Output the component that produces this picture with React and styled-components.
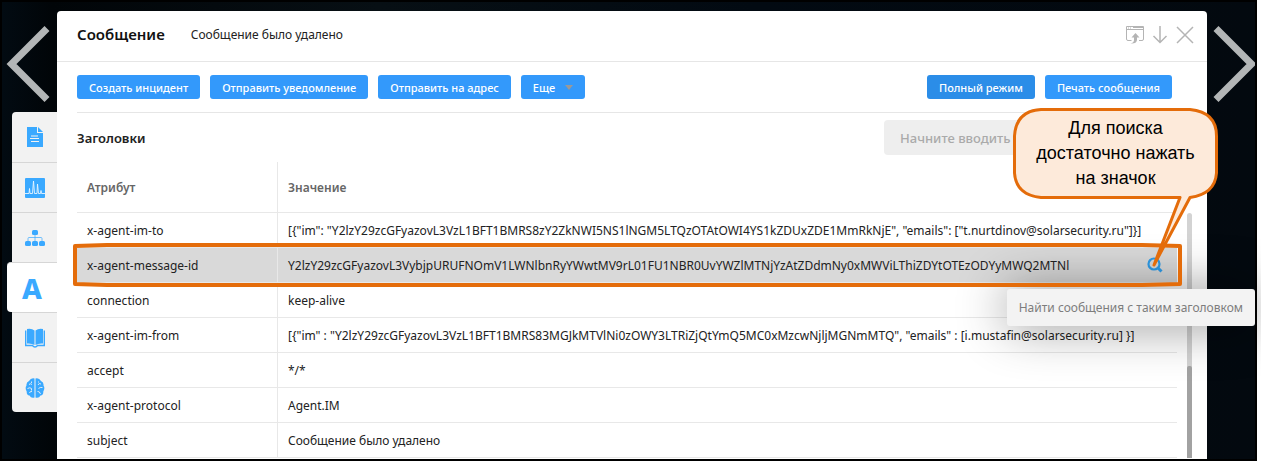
import React from 'react';
import styled, { createGlobalStyle, css } from 'styled-components';

const GlobalStyle = createGlobalStyle`
    * {
        box-sizing: border-box;
    }
    body {
        margin: 0;
        background: #fff;
        color: #222;
        font-family: 'Noto Sans', sans-serif;
        font-size: 12px;
    }
    button, input {
        font-family: inherit;
    }
`;

const Screen = styled.div`
    display: flex;
    margin: 0 4px 7px 0;
    border: 2px solid #000;
    background: linear-gradient(90deg, #020b12, #010508 50px, #070f14 30%, #020a12 60%, #03090f);
`;

const LeftRail = styled.div`
    flex: 0 0 55px;
    display: flex;
    flex-direction: column;
    align-items: flex-end;
`;

const RightRail = styled.div`
    flex: 0 0 48px;
    overflow: hidden;
`;

const PagerButton = styled.button`
    display: block;
    width: 100%;
    height: 110px;
    padding: 0;
    border: 0;
    background: none;
    svg {
        display: block;
    }
`;

const Tab = styled.button`
    display: flex;
    align-items: center;
    justify-content: center;
    width: 45px;
    height: 50px;
    padding: 0;
    border: 0;
    border-top: 1px solid #d6d6d6;
    background: #f2f2f2;
    color: #3aa9ff;
    &:nth-of-type(2) {
        border-top: 0;
        border-top-left-radius: 4px;
    }
    &:last-child {
        border-bottom-left-radius: 4px;
    }
    ${(props) =>
        props.$active &&
        css`
            width: 50px;
            border-radius: 4px 0 0 4px;
            background: #fff;
        `}
`;

const TabLetter = styled.span`
    font-size: 28px;
    line-height: 28px;
    font-weight: 800;
`;

const Modal = styled.main`
    position: relative;
    flex: 1;
    min-width: 0;
    margin-top: 9px;
    padding-bottom: 1px;
    border-radius: 4px 4px 0 0;
    background: #fff;
`;

const ModalHeader = styled.header`
    display: flex;
    align-items: center;
    height: 51px;
    padding: 0 12px 4px 20px;
    border-bottom: 1px solid #e6e6e6;
`;

const ModalTitle = styled.h1`
    margin: 0 26px 0 0;
    font-size: 15px;
    font-weight: 600;
    color: #111;
`;

const Subject = styled.span`
    flex: 1;
    font-size: 12px;
`;

const HeaderActions = styled.div`
    display: flex;
    gap: 6px;
`;

const IconButton = styled.button`
    display: block;
    padding: 0;
    border: 0;
    background: none;
    color: ${(props) => props.$color || '#b4b4b4'};
    svg {
        display: block;
    }
`;

const Toolbar = styled.div`
    display: flex;
    align-items: center;
    gap: 10px;
    height: 51px;
    margin: 0 20px;
    padding-right: 15px;
    border-bottom: 1px solid #e6e6e6;
`;

const Spacer = styled.div`
    flex: 1;
`;

const Button = styled.button`
    display: flex;
    align-items: center;
    gap: 10px;
    height: 24px;
    padding: 0 12px;
    border: 0;
    border-radius: 3px;
    background: ${(props) => (props.$pressed ? '#2b8de8' : '#3399fb')};
    color: #fff;
    font-size: 11px;
    font-weight: 500;
    white-space: nowrap;
`;

const Caret = styled.span`
    border: 4px solid transparent;
    border-top: 5px solid #999;
    border-bottom: 0;
`;

const SectionHeader = styled.div`
    display: flex;
    align-items: center;
    justify-content: space-between;
    height: 49px;
    padding: 0 30px 0 20px;
`;

const SectionTitle = styled.h2`
    margin: 0;
    font-size: 13px;
    font-weight: 600;
    color: #222;
`;

const Search = styled.input`
    width: 293px;
    height: 35px;
    padding: 0 16px;
    border: 0;
    border-radius: 4px;
    background: #eee;
    font-size: 13px;
    font-weight: 500;
    &::placeholder {
        color: #aaa;
    }
`;

const TableArea = styled.div`
    display: flex;
    gap: 10px;
    padding: 0 15px 0 20px;
`;

const Table = styled.table`
    flex: 1;
    min-width: 0;
    table-layout: fixed;
    border-collapse: separate;
    border-spacing: 0;
`;

const HeadCell = styled.th`
    width: ${(props) => props.$width || 'auto'};
    height: 51px;
    padding: 0 10px;
    border-bottom: 1px solid #e8e8e8;
    border-right: ${(props) => (props.$width ? '1px solid #e8e8e8' : '0')};
    color: #666;
    font-size: 12px;
    font-weight: 600;
    text-align: left;
`;

const Row = styled.tr`
    position: relative;
    background: ${(props) => (props.$selected ? '#d9d9d9' : '#fff')};
`;

const Cell = styled.td`
    height: 35px;
    padding: 0 10px;
    border-bottom: 1px solid #e8e8e8;
    font-size: 12px;
    white-space: nowrap;
    &:first-child {
        border-right: 1px solid #e8e8e8;
    }
`;

const CellContent = styled.div`
    display: flex;
    align-items: center;
    justify-content: space-between;
    padding-right: 4px;
`;

const RowOutline = styled.svg`
    position: absolute;
    z-index: 3;
    top: -5px;
    left: -5px;
    width: calc(100% + 11px);
    height: 45px;
    overflow: visible;
    pointer-events: none;
`;

const ScrollTrack = styled.div`
    display: flex;
    flex-direction: column;
    justify-content: flex-end;
    width: 5px;
    margin-top: 51px;
    border-radius: 3px 3px 0 0;
    background: #d3d3d3;
`;

const ScrollThumb = styled.div`
    height: 92px;
    border-radius: 2px 2px 0 0;
    background: #a2a2a2;
`;

const Tooltip = styled.div`
    position: absolute;
    z-index: 2;
    top: 278px;
    right: -48px;
    padding: 0 12px;
    border-radius: 3px;
    background: #f3f3f3;
    box-shadow: 0 0 50px rgba(0, 0, 0, 0.45);
    color: #7d7d7d;
    font-size: 12px;
    line-height: 37px;
    white-space: nowrap;
`;

const Callout = styled.div`
    position: absolute;
    z-index: 4;
    top: 97px;
    right: -11px;
    width: 205px;
    padding: 8px 0;
    color: #000;
    font-family: 'Liberation Sans', Arial, sans-serif;
    font-size: 18px;
    line-height: 25px;
    text-align: center;
    pointer-events: none;
`;

const CalloutShape = styled.svg`
    position: absolute;
    top: 0;
    left: 0;
`;

const CalloutText = styled.p`
    position: relative;
    margin: 0;
`;

const ArrowLeft = () => (
    <svg width="55" height="110" fill="none" stroke="#b3b6b7" strokeWidth="7">
        <path d="M45 26.500 9.500 62l35.500 35.500" />
    </svg>
);

const ArrowRight = () => (
    <svg width="55" height="110" fill="none" stroke="#b3b6b7" strokeWidth="7">
        <path d="M9 26.500 44.500 62 9 97.500" />
    </svg>
);

const DocumentIcon = () => (
    <svg width="16" height="20" viewBox="0 0 16 20" fill="currentColor">
        <path d="M0 0h10v6h6v14H0z" />
        <path d="M11 0l5 5h-5z" />
        <path d="M4 9h7M3 11.500h9M4 14.500h8" stroke="#f2f2f2" strokeWidth="1" />
    </svg>
);

const SpectrumIcon = () => (
    <svg width="20" height="20" viewBox="0 0 20 20">
        <rect width="20" height="20" rx="1" fill="currentColor" />
        <path
            d="M0 15.500h4l.5-5 .5 5h2.500l1-12.500 1 12.500h2.500l.5-9.500 1 9.500h2l.5-3 .5 3h3.500"
            fill="none"
            stroke="#e8f5ff"
            strokeWidth=".9"
        />
    </svg>
);

const HierarchyIcon = () => (
    <svg width="20" height="16" viewBox="0 0 20 16" fill="currentColor">
        <rect x="7" y="0" width="6" height="5" rx="1.500" />
        <rect x="0" y="11" width="6" height="5" rx="1.500" />
        <rect x="7" y="11" width="6" height="5" rx="1.500" />
        <rect x="14" y="11" width="6" height="5" rx="1.500" />
        <path d="M10 5v6M3 11V8.500Q3 7.500 4 7.500h12Q17 7.500 17 8.500V11" fill="none" stroke="currentColor" opacity=".7" />
    </svg>
);

const BookIcon = () => (
    <svg width="20" height="20" viewBox="0 0 20 20" fill="currentColor">
        <path d="M2 1Q6.500 0 9.500 2.500V17Q6.500 15 2 15.500z" />
        <path d="M18 1Q13.500 0 10.500 2.500V17Q13.500 15 18 15.500z" />
        <path
            d="M.7 2.500V17.500H7.500Q8.500 19 10 19t2.500-1.500h6.800V2.500"
            fill="none"
            stroke="currentColor"
            strokeWidth="1.400"
        />
    </svg>
);

const BrainIcon = () => (
    <svg width="20" height="20" viewBox="0 0 20 20" fill="currentColor">
        <path d="M9.500.5v19Q6 20.500 4.500 17.500 1.500 17 1.700 13.500-.3 10 1.500 7.500 1 4.500 4 3 6-.5 9.500.5z" />
        <path d="M10.500.5v19Q14 20.500 15.500 17.500 18.500 17 18.300 13.500 20.300 10 18.500 7.500 19 4.500 16 3 14-.5 10.500.5z" />
        <path
            d="M4 6.500q1.500-1.500 3 0M2.500 10.500q2.500-1.500 4 0v2M4.500 15q.500-2 2.500-1.500M6.500 3.500v1.500M16 6q-2-1.500-3 1M17.500 9.500q-2.500-.5-4 1M12.500 13.500q2-.5 3 2.500M13.500 3.500v1"
            fill="none"
            stroke="#f2f2f2"
            strokeWidth=".9"
        />
    </svg>
);

const WindowIcon = () => (
    <svg width="19" height="19" viewBox="0 0 19 19" fill="none" stroke="currentColor">
        <path d="M5.500 15.500H2Q.5 15.500.5 14V1.500H17.500V14Q17.500 15.500 16 15.500H13M.5 4.500h17" />
        <path d="M2 3h1M4 3h1M7 2.500h10" />
        <path d="M4.500 18.500Q8 17.500 8 15V12.500H5.500L9.500 8l4 4.500H11V15Q10.500 19 4.500 18.500z" fill="currentColor" stroke="none" />
    </svg>
);

const DownIcon = () => (
    <svg width="19" height="19" viewBox="0 0 19 19" fill="none" stroke="currentColor" strokeWidth="1.500">
        <path d="M9 1v16M2.500 11l6.500 6.500 6.500-6.500" />
    </svg>
);

const CloseIcon = () => (
    <svg width="19" height="19" viewBox="0 0 19 19" fill="none" stroke="currentColor" strokeWidth="1.500">
        <path d="M1 2l16 16M17 2l-16 16" />
    </svg>
);

const SearchIcon = () => (
    <svg width="16" height="16" viewBox="0 0 16 16" fill="none" stroke="currentColor">
        <circle cx="7" cy="7" r="5.500" strokeWidth="2.200" />
        <path d="M11 11l3.500 3.500" strokeWidth="3" />
    </svg>
);

const headers = [
    {
        name: 'x-agent-im-to',
        value: '[{"im": "Y2lzY29zcGFyazovL3VzL1BFT1BMRS8zY2ZkNWI5NS1lNGM5LTQzOTAtOWI4YS1kZDUxZDE1MmRkNjE", "emails": ["t.nurtdinov@solarsecurity.ru"]}]',
    },
    {
        name: 'x-agent-message-id',
        value: 'Y2lzY29zcGFyazovL3VybjpURUFNOmV1LWNlbnRyYWwtMV9rL01FU1NBR0UvYWZlMTNjYzAtZDdmNy0xMWViLThiZDYtOTEzODYyMWQ2MTNl',
        selected: true,
    },
    { name: 'connection', value: 'keep-alive' },
    {
        name: 'x-agent-im-from',
        value: '[{"im" : "Y2lzY29zcGFyazovL3VzL1BFT1BMRS83MGJkMTVlNi0zOWY3LTRiZjQtYmQ5MC0xMzcwNjljMGNmMTQ", "emails" : [i.mustafin@solarsecurity.ru] }]',
    },
    { name: 'accept', value: '*/*' },
    { name: 'x-agent-protocol', value: 'Agent.IM' },
    { name: 'subject', value: 'Сообщение было удалено' },
];

const HeaderRow = ({ name, value, selected }) => (
    <Row $selected={selected}>
        <Cell>
            {name}
            {selected && (
                <RowOutline viewBox="0 0 1111 45" preserveAspectRatio="none">
                    <path
                        d="M3 3L35 2H1070L1108 3V41L1070 42H35L3 41z"
                        fill="none"
                        stroke="#e46c0a"
                        strokeWidth="4"
                        strokeLinejoin="round"
                        vectorEffect="non-scaling-stroke"
                    />
                </RowOutline>
            )}
        </Cell>
        <Cell>
            <CellContent>
                {value}
                {selected && (
                    <IconButton $color="#2f9ce8" aria-label="Найти">
                        <SearchIcon />
                    </IconButton>
                )}
            </CellContent>
        </Cell>
    </Row>
);

const App = () => (
    <>
        <GlobalStyle />
        <Screen>
            <LeftRail>
                <PagerButton aria-label="Назад">
                    <ArrowLeft />
                </PagerButton>
                <Tab aria-label="Документ">
                    <DocumentIcon />
                </Tab>
                <Tab aria-label="Спектр">
                    <SpectrumIcon />
                </Tab>
                <Tab aria-label="Структура">
                    <HierarchyIcon />
                </Tab>
                <Tab $active>
                    <TabLetter>A</TabLetter>
                </Tab>
                <Tab aria-label="Словарь">
                    <BookIcon />
                </Tab>
                <Tab aria-label="Анализ">
                    <BrainIcon />
                </Tab>
            </LeftRail>
            <Modal>
                <ModalHeader>
                    <ModalTitle>Сообщение</ModalTitle>
                    <Subject>Сообщение было удалено</Subject>
                    <HeaderActions>
                        <IconButton aria-label="В новом окне">
                            <WindowIcon />
                        </IconButton>
                        <IconButton aria-label="Скачать">
                            <DownIcon />
                        </IconButton>
                        <IconButton aria-label="Закрыть">
                            <CloseIcon />
                        </IconButton>
                    </HeaderActions>
                </ModalHeader>
                <Toolbar>
                    <Button>Создать инцидент</Button>
                    <Button>Отправить уведомление</Button>
                    <Button>Отправить на адрес</Button>
                    <Button>
                        Еще <Caret />
                    </Button>
                    <Spacer />
                    <Button $pressed>Полный режим</Button>
                    <Button>Печать сообщения</Button>
                </Toolbar>
                <SectionHeader>
                    <SectionTitle>Заголовки</SectionTitle>
                    <Search type="text" aria-label="Поиск" placeholder="Начните вводить текст" />
                </SectionHeader>
                <TableArea>
                    <Table>
                        <thead>
                            <tr>
                                <HeadCell $width="201px">Атрибут</HeadCell>
                                <HeadCell>Значение</HeadCell>
                            </tr>
                        </thead>
                        <tbody>
                            {headers.map((header) => (
                                <HeaderRow key={header.name} {...header} />
                            ))}
                        </tbody>
                    </Table>
                    <ScrollTrack>
                        <ScrollThumb />
                    </ScrollTrack>
                </TableArea>
                <Tooltip role="tooltip">Найти сообщения с таким заголовком</Tooltip>
                <Callout>
                    <CalloutShape width="205" height="160" viewBox="0 0 205 160">
                        <path
                            d="M28 1.500H177Q203.500 4 203.500 28V65Q202 86 177 89.500L141 157 167 89.500H28Q3 87 1.500 65V28Q3 3 28 1.500z"
                            fill="#fdeada"
                            stroke="#e46c0a"
                            strokeWidth="3"
                            strokeLinejoin="round"
                        />
                    </CalloutShape>
                    <CalloutText>
                        Для поиска
                        <br />
                        достаточно нажать
                        <br />
                        на значок
                    </CalloutText>
                </Callout>
            </Modal>
            <RightRail>
                <PagerButton aria-label="Вперед">
                    <ArrowRight />
                </PagerButton>
            </RightRail>
        </Screen>
    </>
);

export default App;
